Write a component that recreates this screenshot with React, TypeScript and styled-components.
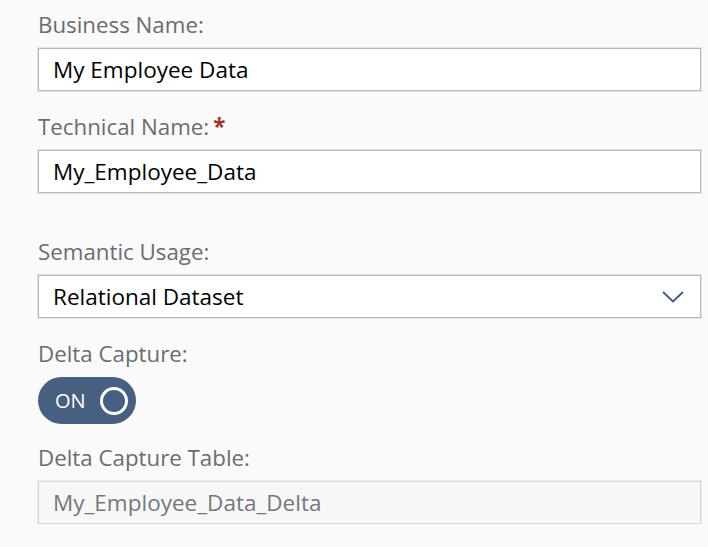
import React from "react";
import styled, { createGlobalStyle } from "styled-components";

const Global = createGlobalStyle`
  html, body { margin: 0; padding: 0; background: #fafafa; }
  body { font-family: "Open Sans", Lato, sans-serif; }
`;

const Form = styled.div`
  display: flex;
  flex-direction: column;
  padding: 11px 7px 0 38px;
`;

const Field = styled.div<{ $gapTop?: number }>`
  display: flex;
  flex-direction: column;
  margin-top: ${(p) => p.$gapTop ?? 0}px;
`;

const Label = styled.div`
  font-size: 22.3px;
  line-height: 27px;
  color: #6a6d70;
  margin-bottom: 10px;
`;

const Required = styled.span`
  color: #a4302c;
  font-weight: 700;
  margin-left: 4px;
`;

const Input = styled.div<{ $disabled?: boolean }>`
  box-sizing: border-box;
  height: 43px;
  display: flex;
  align-items: center;
  padding: 0 14px;
  font-size: 22.5px;
  color: ${(p) => (p.$disabled ? "#74777a" : "#000")};
  background: ${(p) => (p.$disabled ? "#f7f7f7" : "#fff")};
  border: 1px solid ${(p) => (p.$disabled ? "#d6d6d6" : "#b8b8b8")};
  box-shadow: 0 0 0 1px ${(p) => (p.$disabled ? "#ececec" : "#e4e4e4")};
`;

const Select = styled(Input)`
  justify-content: space-between;
  padding-right: 16px;
`;

const Toggle = styled.div`
  box-sizing: border-box;
  width: 98px;
  height: 47px;
  border-radius: 24px;
  background: #475f80;
  display: flex;
  align-items: center;
  justify-content: space-between;
  padding: 0 8px 0 17px;
  color: #fff;
  font-size: 20px;
`;

const Knob = styled.div`
  box-sizing: border-box;
  width: 28px;
  height: 28px;
  border-radius: 50%;
  border: 3px solid #fff;
`;

export default function App() {
  return (
    <>
      <Global />
      <Form>
        <Field>
          <Label>Business Name:</Label>
          <Input>My Employee Data</Input>
        </Field>
        <Field $gapTop={22}>
          <Label>
            Technical Name:<Required>*</Required>
          </Label>
          <Input>My_Employee_Data</Input>
        </Field>
        <Field $gapTop={45}>
          <Label>Semantic Usage:</Label>
          <Select>
            <span>Relational Dataset</span>
            <svg width="22" height="12" viewBox="0 0 22 12">
              <path d="M1 1 L11 10.5 L21 1" fill="none" stroke="#3b5a84" strokeWidth="1.8" />
            </svg>
          </Select>
        </Field>
        <Field $gapTop={22}>
          <Label>Delta Capture:</Label>
          <Toggle>
            <span>ON</span>
            <Knob />
          </Toggle>
        </Field>
        <Field $gapTop={20}>
          <Label>Delta Capture Table:</Label>
          <Input $disabled>My_Employee_Data_Delta</Input>
        </Field>
      </Form>
    </>
  );
}
